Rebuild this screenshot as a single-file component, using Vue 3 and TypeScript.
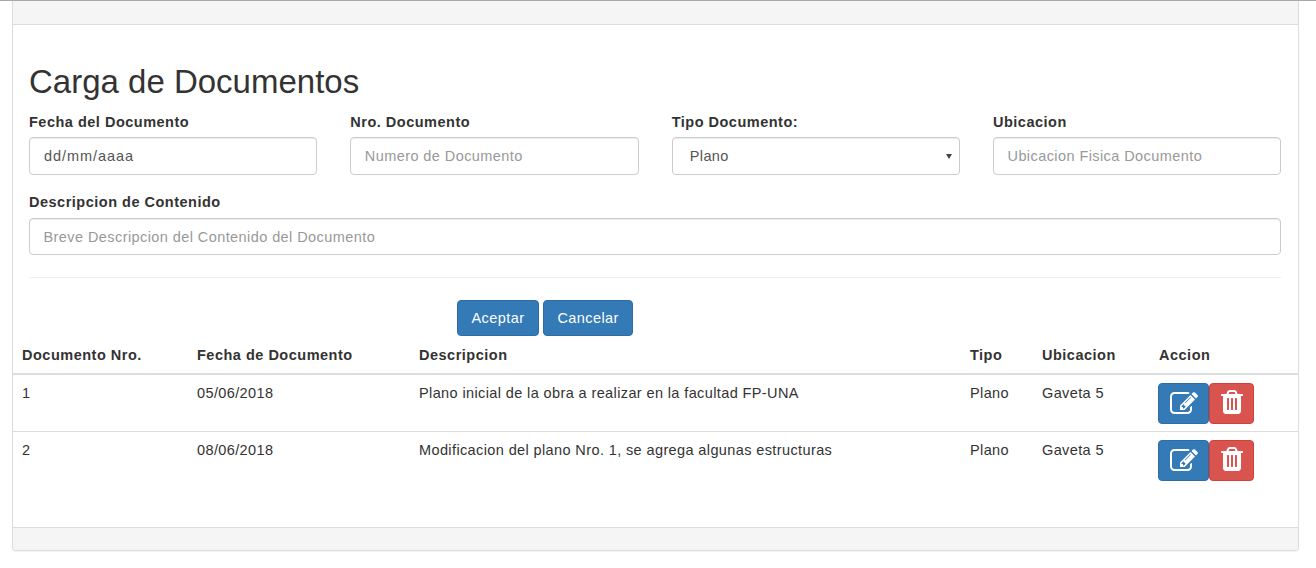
<script setup lang="ts">
interface Documento {
  nro: number;
  fecha: string;
  descripcion: string;
  tipo: string;
  ubicacion: string;
}

const documentos: Documento[] = [
  {
    nro: 1,
    fecha: '05/06/2018',
    descripcion: 'Plano inicial de la obra a realizar en la facultad FP-UNA',
    tipo: 'Plano',
    ubicacion: 'Gaveta 5',
  },
  {
    nro: 2,
    fecha: '08/06/2018',
    descripcion: 'Modificacion del plano Nro. 1, se agrega algunas estructuras',
    tipo: 'Plano',
    ubicacion: 'Gaveta 5',
  },
];
</script>

<template>
  <div class="page">
    <section class="panel">
      <div class="panel-heading"></div>
      <div class="panel-body">
        <h1 class="title">Carga de Documentos</h1>
        <form class="form" @submit.prevent>
          <div class="form-row">
            <label class="field">
              <span class="label">Fecha del Documento</span>
              <input class="control control-date" type="text" value="dd/mm/aaaa" />
            </label>
            <label class="field">
              <span class="label">Nro. Documento</span>
              <input class="control" type="text" placeholder="Numero de Documento" />
            </label>
            <label class="field">
              <span class="label">Tipo Documento:</span>
              <span class="select-wrap">
                <select class="control control-select">
                  <option>Plano</option>
                </select>
              </span>
            </label>
            <label class="field">
              <span class="label">Ubicacion</span>
              <input class="control" type="text" placeholder="Ubicacion Fisica Documento" />
            </label>
          </div>
          <label class="field field-wide">
            <span class="label">Descripcion de Contenido</span>
            <input class="control control-wide" type="text" placeholder="Breve Descripcion del Contenido del Documento" />
          </label>
          <hr class="divider" />
          <div class="actions">
            <button class="btn btn-primary" type="submit">Aceptar</button>
            <button class="btn btn-primary" type="button">Cancelar</button>
          </div>
        </form>
      </div>

      <table class="table">
        <colgroup>
          <col class="col-nro" />
          <col class="col-fecha" />
          <col class="col-desc" />
          <col class="col-tipo" />
          <col class="col-ubic" />
          <col />
        </colgroup>
        <thead>
          <tr>
            <th>Documento Nro.</th>
            <th>Fecha de Documento</th>
            <th>Descripcion</th>
            <th>Tipo</th>
            <th>Ubicacion</th>
            <th>Accion</th>
          </tr>
        </thead>
        <tbody>
          <tr v-for="doc in documentos" :key="doc.nro">
            <td>{{ doc.nro }}</td>
            <td>{{ doc.fecha }}</td>
            <td>{{ doc.descripcion }}</td>
            <td>{{ doc.tipo }}</td>
            <td>{{ doc.ubicacion }}</td>
            <td class="cell-actions">
              <button class="btn-icon btn-edit" type="button" aria-label="Editar">
                <svg viewBox="0 0 1792 1792" width="28" height="28" fill="currentColor" aria-hidden="true">
                  <path d="M888 1184l116-116-152-152-116 116v56h96v96h56zm440-720q-16-16-33 1l-350 350q-17 17-1 33t33-1l350-350q17-17 1-33zm80 594v190q0 119-84.500 203.500t-203.500 84.500h-832q-119 0-203.500-84.500t-84.500-203.500v-832q0-119 84.500-203.500t203.500-84.500h832q63 0 117 25 15 7 18 23 3 17-9 29l-49 49q-14 14-32 8-23-6-45-6h-832q-66 0-113 47t-47 113v832q0 66 47 113t113 47h832q66 0 113-47t47-113v-126q0-13 9-22l64-64q15-15 35-7t20 29zm-96-738l288 288-672 672h-288v-288zm444 132l-92 92-288-288 92-92q28-28 68-28t68 28l152 152q28 28 28 68t-28 68z" />
                </svg>
              </button>
              <button class="btn-icon btn-delete" type="button" aria-label="Eliminar">
                <svg viewBox="0 0 1408 1792" width="22" height="28" fill="currentColor" aria-hidden="true">
                  <path d="M512 1248v-704q0-14-9-23t-23-9h-64q-14 0-23 9t-9 23v704q0 14 9 23t23 9h64q14 0 23-9t9-23zm256 0v-704q0-14-9-23t-23-9h-64q-14 0-23 9t-9 23v704q0 14 9 23t23 9h64q14 0 23-9t9-23zm256 0v-704q0-14-9-23t-23-9h-64q-14 0-23 9t-9 23v704q0 14 9 23t23 9h64q14 0 23-9t9-23zm-544-992h448l-48-117q-7-9-17-11h-317q-10 2-17 11zm928 32v64q0 14-9 23t-23 9h-96v948q0 83-47 143.500t-113 60.500h-832q-66 0-113-58.500t-47-141.500v-952h-96q-14 0-23-9t-9-23v-64q0-14 9-23t23-9h309l70-167q15-37 54-63t79-26h320q40 0 79 26t54 63l70 167h309q14 0 23 9t9 23z" />
                </svg>
              </button>
            </td>
          </tr>
        </tbody>
      </table>

      <div class="panel-footer"></div>
    </section>
  </div>
</template>

<style>
html,
body {
  margin: 0;
  background: #fff;
}
</style>

<style scoped>
.page {
  box-sizing: border-box;
  height: 568px;
  padding: 0 17px 0 12px;
  border-top: 1px solid #a9a9a9;
  font-family: "Liberation Sans", Arial, sans-serif;
  font-size: 14.5px;
  line-height: 20px;
  letter-spacing: 0.42px;
  color: #333;
}

.panel {
  box-sizing: border-box;
  display: flex;
  flex-direction: column;
  height: 550px;
  background: #fff;
  border: 1px solid #ddd;
  border-top: 0;
  border-radius: 0 0 4px 4px;
  box-shadow: 0 1px 1px rgba(0, 0, 0, 0.05);
}

.panel-heading {
  height: 23px;
  flex: none;
  background: #f5f5f5;
  border-bottom: 1px solid #ddd;
}

.panel-body {
  padding: 37px 17px 0 16px;
}

.title {
  margin: 0 0 10px;
  font-size: 33px;
  font-weight: 500;
  line-height: 40px;
  letter-spacing: 0;
  color: #333;
}

.form-row {
  display: grid;
  grid-template-columns: repeat(4, 288.33px);
  column-gap: 33px;
}

.field {
  display: block;
  margin-bottom: 17px;
}

.label {
  display: block;
  margin-bottom: 5px;
  font-weight: 700;
  letter-spacing: 0.5px;
}

.control {
  box-sizing: border-box;
  display: block;
  width: 100%;
  height: 38px;
  padding: 6px 14px 6px 13.5px;
  font: inherit;
  letter-spacing: inherit;
  color: #555;
  background: #fff;
  border: 1px solid #ccc;
  border-radius: 4px;
  box-shadow: inset 0 1px 1px rgba(0, 0, 0, 0.075);
}

.control::placeholder {
  color: #999;
}

.control-date {
  padding-left: 14px;
  letter-spacing: 0.95px;
}

.select-wrap {
  display: block;
  position: relative;
}

.select-wrap::after {
  content: "";
  position: absolute;
  top: 17px;
  right: 8px;
  border-top: 5px solid #444;
  border-left: 3px solid transparent;
  border-right: 3px solid transparent;
  pointer-events: none;
}

.control-select {
  appearance: none;
  padding-left: 17px;
}

.control-wide {
  height: 37px;
}

.field-wide {
  margin-bottom: 0;
}

.field-wide .label {
  margin-bottom: 6px;
}

.divider {
  margin: 22px 0;
  border: 0;
  border-top: 1px solid #eee;
}

.actions {
  display: flex;
  gap: 4px;
  padding-left: 428px;
}

.btn {
  height: 36px;
  padding: 0 13.5px;
  font: inherit;
  letter-spacing: inherit;
  color: #fff;
  border: 1px solid #2e6da4;
  border-radius: 4px;
}

.btn-primary {
  background: #337ab7;
}

.table {
  width: 100%;
  table-layout: fixed;
  border-collapse: collapse;
  margin-top: 1px;
}

.col-nro {
  width: 175px;
}

.col-fecha {
  width: 222px;
}

.col-desc {
  width: 551px;
}

.col-tipo {
  width: 72px;
}

.col-ubic {
  width: 117px;
}

.table th,
.table td {
  padding: 8px 8px 8px 9px;
  text-align: left;
  vertical-align: top;
  letter-spacing: 0.385px;
}

.table th {
  height: 34px;
  box-sizing: border-box;
  border-bottom: 2px solid #ddd;
  letter-spacing: 0.5px;
}

.table td {
  height: 57px;
  box-sizing: border-box;
  border-top: 1px solid #ddd;
}

.table tbody tr:first-child td {
  height: 56px;
  border-top: 0;
}

.table td.cell-actions {
  display: flex;
  padding-left: 8px;
}

.btn-icon {
  display: flex;
  align-items: center;
  justify-content: center;
  height: 41px;
  padding: 0;
  color: #fff;
  border: 1px solid transparent;
  border-radius: 4px;
}

.btn-edit {
  width: 51px;
  background: #337ab7;
  border-color: #2e6da4;
}

.btn-delete {
  width: 45px;
  background: #d9534f;
  border-color: #d43f3a;
}

.panel-footer {
  height: 22px;
  flex: none;
  margin-top: auto;
  background: #f5f5f5;
  border-top: 1px solid #ddd;
  border-radius: 0 0 3px 3px;
}
</style>
